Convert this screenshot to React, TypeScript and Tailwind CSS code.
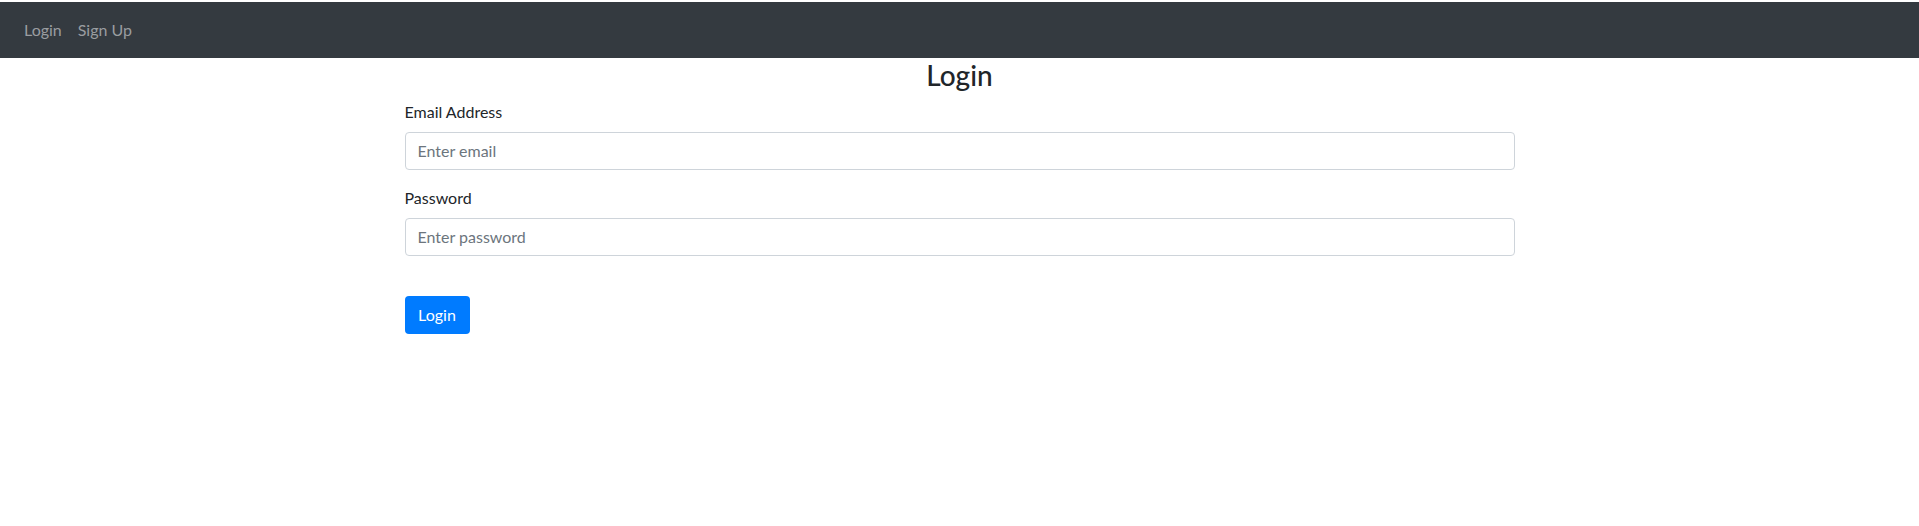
import React from 'react';

const App: React.FC = () => {
  return (
    <div className="min-h-screen bg-white text-[#212529] font-['Lato','Liberation_Sans',sans-serif]">
      {/* Navbar */}
      <nav className="mt-[1.5px] h-14 bg-[#343a40] flex items-center px-4">
        <a href="#" className="px-2 py-2 text-base leading-6 text-[#9a9da0]">Login</a>
        <a href="#" className="px-2 py-2 text-base leading-6 text-[#9a9da0]">Sign Up</a>
      </nav>

      {/* Form */}
      <div className="w-[1110px] mx-auto">
        <h3 className="text-center text-[28px] font-medium leading-[34px] mb-2">Login</h3>
        <form onSubmit={(e) => e.preventDefault()}>
          <div className="mb-4">
            <label className="block text-base leading-6 mb-[8px]">Email Address</label>
            <input
              type="email"
              placeholder="Enter email"
              className="block w-full h-[38px] px-3 text-base border border-[#ced4da] rounded-[4px] placeholder:text-[#6c757d] outline-none"
            />
          </div>
          <div className="mb-10">
            <label className="block text-base leading-6 mb-2">Password</label>
            <input
              type="password"
              placeholder="Enter password"
              className="block w-full h-[38px] px-3 text-base border border-[#ced4da] rounded-[4px] placeholder:text-[#6c757d] outline-none"
            />
          </div>
          <button type="submit" className="h-[38px] w-[65px] bg-[#007bff] text-white text-base rounded-[4px]">
            Login
          </button>
        </form>
      </div>
    </div>
  );
};

export default App;
